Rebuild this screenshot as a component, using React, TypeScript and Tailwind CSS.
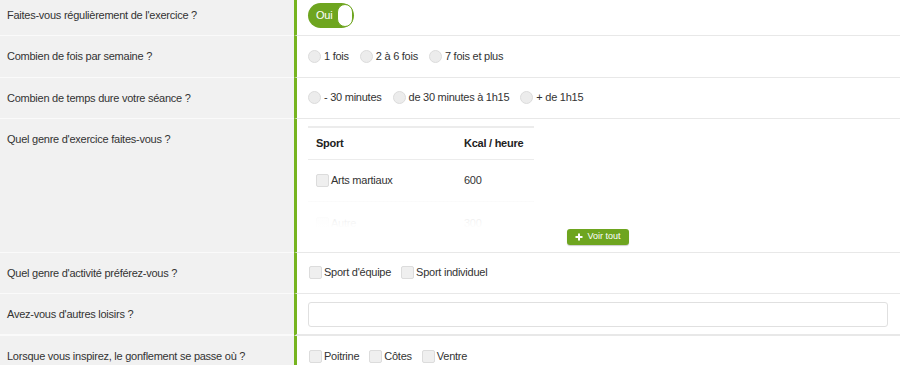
import React from "react";

const font = { fontFamily: '"Liberation Sans", Arial, sans-serif' };

function Row({
  label,
  children,
  labelPt = "pt-[13px]",
  h,
  border = "border-b",
}: {
  label: string;
  children: React.ReactNode;
  labelPt?: string;
  h: string;
  border?: string;
}) {
  return (
    <div className={`flex ${h}`}>
      <div className={`w-[294px] shrink-0 bg-[#f1f1f1] pl-[7px] ${labelPt} ${border} border-[#fafafa] leading-[14px] text-[#333]`}>
        {label}
      </div>
      <div className={`flex-1 border-l-[3px] border-l-[#76b41f] ${border} border-b-[#e8e8e8] pl-[11px] pr-[12px]`}>
        {children}
      </div>
    </div>
  );
}

function Radio({ label }: { label: string }) {
  return (
    <label className="flex items-center gap-[3px]">
      <span className="h-[13px] w-[13px] rounded-full border border-[#dcdcdc] bg-[#ececec]" />
      <span>{label}</span>
    </label>
  );
}

function Check({ label }: { label: string }) {
  return (
    <label className="flex items-center gap-[2px]">
      <span className="h-[13px] w-[13px] rounded-[2px] border border-[#dcdcdc] bg-[#efefef]" />
      <span>{label}</span>
    </label>
  );
}

export default function App() {
  return (
    <div className="h-[365px] w-[900px] overflow-hidden bg-white text-[11px] tracking-[-0.25px] text-[#333]" style={font}>
      <Row label="Faites-vous régulièrement de l'exercice ?" labelPt="pt-[8px]" h="h-[36px]">
        <div className="pt-[3px]">
          <div className="flex h-[25px] w-[46px] items-center rounded-full bg-[#6ea51f] pl-[8px] pr-[1px]">
            <span className="text-[11px] text-white">Oui</span>
            <span className="ml-auto h-[23px] w-[16px] rounded-full border border-[#6ea51f] bg-white" />
          </div>
        </div>
      </Row>

      <Row label="Combien de fois par semaine ?" h="h-[42px]">
        <div className="flex h-full items-center gap-[11px] pb-[1px]">
          <Radio label="1 fois" />
          <Radio label="2 à 6 fois" />
          <Radio label="7 fois et plus" />
        </div>
      </Row>

      <Row label="Combien de temps dure votre séance ?" h="h-[41px]">
        <div className="flex h-full items-center gap-[11px] pb-[1px]">
          <Radio label="- 30 minutes" />
          <Radio label="de 30 minutes à 1h15" />
          <Radio label="+ de 1h15" />
        </div>
      </Row>

      <Row label="Quel genre d'exercice faites-vous ?" h="h-[134px]">
        <div className="pt-[7px]">
          <div className="relative h-[102px] w-[226px] overflow-hidden border-t-2 border-[#ececec]">
            <div className="flex h-[32px] items-center border-b border-[#ececec] font-bold text-[#222]">
              <div className="w-[148px] pl-[8px]">Sport</div>
              <div className="pl-[8px]">Kcal / heure</div>
            </div>
            <div className="flex h-[42px] items-center border-b border-[#ececec]">
              <div className="w-[148px] pl-[8px]">
                <Check label="Arts martiaux" />
              </div>
              <div className="pl-[8px]">600</div>
            </div>
            <div className="flex h-[42px] items-center">
              <div className="w-[148px] pl-[8px]">
                <Check label="Autre" />
              </div>
              <div className="pl-[8px]">300</div>
            </div>
            <div className="absolute inset-x-0 bottom-0 h-[34px] bg-gradient-to-b from-white/70 to-white" />
          </div>
          <div className="mt-[1px] flex justify-center">
            <button className="flex h-[16px] w-[62px] items-center justify-center gap-[4px] rounded-[3px] bg-[#6ea51f] text-[9px] tracking-normal text-white shadow-[0_1px_1px_rgba(0,0,0,0.2)]">
              <svg width="8" height="8" viewBox="0 0 8 8">
                <path d="M4 0.5v7M0.5 4h7" stroke="white" strokeWidth="2" />
              </svg>
              Voir tout
            </button>
          </div>
        </div>
      </Row>

      <Row label="Quel genre d'activité préférez-vous ?" h="h-[41px]">
        <div className="flex h-full items-center gap-[10px] pb-[1px] pl-[1px]">
          <Check label="Sport d'équipe" />
          <Check label="Sport individuel" />
        </div>
      </Row>

      <Row label="Avez-vous d'autres loisirs ?" h="h-[42px]" border="border-b-2">
        <div className="pt-[8px]">
          <input className="h-[25px] w-full rounded-[3px] border border-[#e0e0e0] bg-white px-2 outline-none" />
        </div>
      </Row>

      <Row label="Lorsque vous inspirez, le gonflement se passe où ?" h="h-[40px]" border="">
        <div className="flex h-full items-center gap-[10px] pb-[1px] pl-[1px] pt-[1px]">
          <Check label="Poitrine" />
          <Check label="Côtes" />
          <Check label="Ventre" />
        </div>
      </Row>
    </div>
  );
}
